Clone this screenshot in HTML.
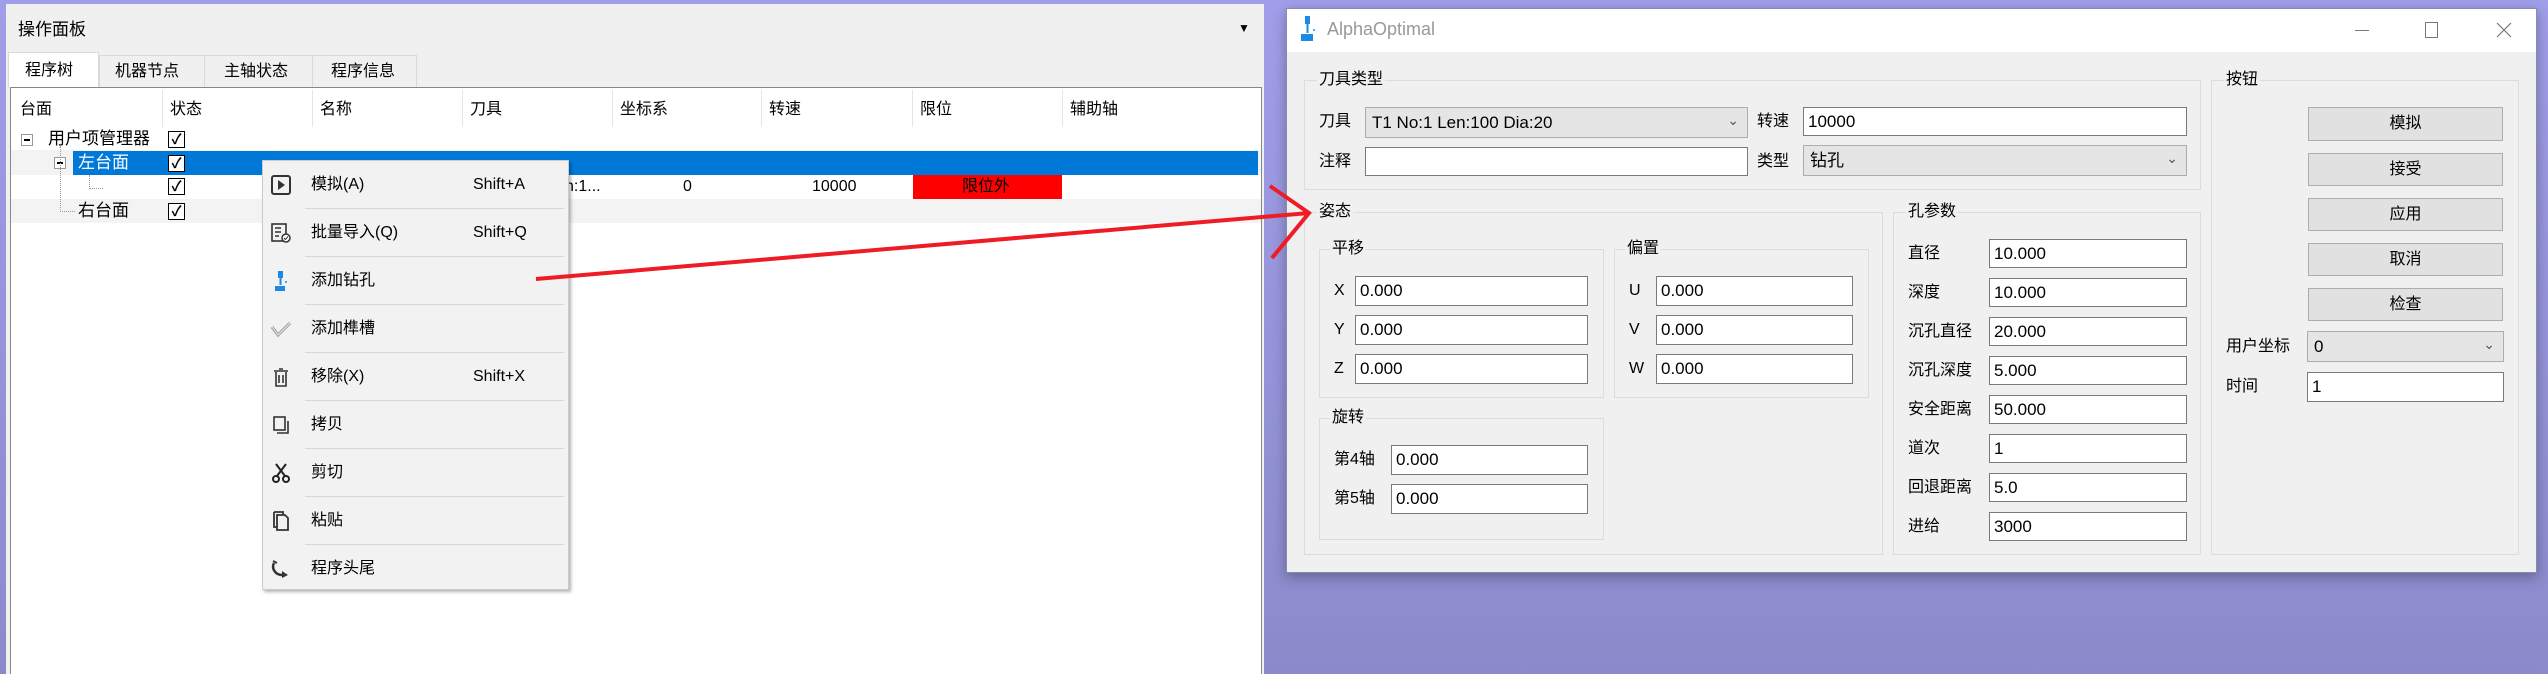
<!DOCTYPE html>
<html><head><meta charset="utf-8"><style>
*{box-sizing:border-box;margin:0;padding:0}
body{width:2548px;height:674px;overflow:hidden;position:relative;background:linear-gradient(#a09ee8,#8a8acb);font-family:"Liberation Sans","Noto Sans CJK SC",sans-serif;font-size:16px;color:#000}
.a{position:absolute}
.t{position:absolute;white-space:nowrap;line-height:20px}
.inp{position:absolute;background:#fff;border:1px solid #7a7a7a;padding-left:4px;line-height:27px;font-size:17px}
.cmb{position:absolute;background:#e5e5e5;border:1px solid #adadad;padding-left:6px;font-size:17px}
.cmb:after{content:"⌄";position:absolute;right:8px;top:-2px;font-size:14px;color:#555}
.grp{position:absolute;border:1px solid #dcdcdc}
.gl{position:absolute;background:#f0f0f0;padding:0 2px;line-height:20px;font-size:16px;top:-11px;left:12px}
.btn{position:absolute;background:#e1e1e1;border:1px solid #adadad;text-align:center;line-height:31px;font-size:16px}
.cb{position:absolute;width:17px;height:17px;border:1.5px solid #000;background:#fff;font-size:14px;line-height:14px;text-align:center;font-weight:bold}
.mi{position:absolute;left:0;width:307px;height:48px}
.mi .tx{position:absolute;left:48px;top:14px;line-height:20px}
.mi .sc{position:absolute;left:210px;top:14px;line-height:20px}
.mi .sep{position:absolute;left:42px;right:6px;bottom:0;height:1px;background:#d7d7d7}
.mi .ic{position:absolute;left:6px;top:12px;width:24px;height:24px}
</style></head><body>
<div class="a" style="left:6px;top:4px;width:1258px;height:670px;background:#f0f0f0"></div>
<div class="t" style="left:18px;top:20px;font-size:17px">操作面板</div>
<div class="t" style="left:1238px;top:18px;font-size:12px">▼</div>
<div class="a" style="left:8px;top:52px;width:91px;height:36px;background:#fff;border:1px solid #d9d9d9;border-bottom:none"></div>
<div class="a" style="left:99px;top:55px;width:318px;height:33px;background:#f0f0f0;border:1px solid #d9d9d9;border-bottom:none"></div>
<div class="a" style="left:204px;top:55px;width:1px;height:33px;background:#d9d9d9"></div>
<div class="a" style="left:312px;top:55px;width:1px;height:33px;background:#d9d9d9"></div>
<div class="t" style="left:25px;top:61px">程序树</div>
<div class="t" style="left:115px;top:62px">机器节点</div>
<div class="t" style="left:224px;top:62px">主轴状态</div>
<div class="t" style="left:331px;top:62px">程序信息</div>
<div class="a" style="left:10px;top:87px;width:1252px;height:587px;background:#fff;border:1px solid #828790;border-bottom:none"></div>
<div class="a" style="left:11px;top:88px;width:1250px;height:39px;background:#fff"></div>
<div class="t" style="left:20px;top:100px">台面</div>
<div class="a" style="left:162px;top:90px;width:1px;height:37px;background:#e5e5e5"></div><div class="t" style="left:170px;top:100px">状态</div>
<div class="a" style="left:312px;top:90px;width:1px;height:37px;background:#e5e5e5"></div><div class="t" style="left:320px;top:100px">名称</div>
<div class="a" style="left:462px;top:90px;width:1px;height:37px;background:#e5e5e5"></div><div class="t" style="left:470px;top:100px">刀具</div>
<div class="a" style="left:612px;top:90px;width:1px;height:37px;background:#e5e5e5"></div><div class="t" style="left:620px;top:100px">坐标系</div>
<div class="a" style="left:761px;top:90px;width:1px;height:37px;background:#e5e5e5"></div><div class="t" style="left:769px;top:100px">转速</div>
<div class="a" style="left:912px;top:90px;width:1px;height:37px;background:#e5e5e5"></div><div class="t" style="left:920px;top:100px">限位</div>
<div class="a" style="left:1062px;top:90px;width:1px;height:37px;background:#e5e5e5"></div><div class="t" style="left:1070px;top:100px">辅助轴</div>
<div class="a" style="left:11px;top:150px;width:1250px;height:25px;background:#f3f3f3"></div>
<div class="a" style="left:11px;top:199px;width:1250px;height:24px;background:#f3f3f3"></div>
<div class="a" style="left:73px;top:151px;width:1185px;height:24px;background:#0078d7"></div>
<div class="a" style="left:21px;top:134px;width:12px;height:12px;border:1px solid #999;background:#fff"></div><div class="a" style="left:24px;top:139px;width:6px;height:2px;background:#000"></div>
<div class="a" style="left:54px;top:157px;width:12px;height:12px;border:1px solid #999;background:#fff"></div><div class="a" style="left:57px;top:162px;width:6px;height:2px;background:#000"></div>
<div class="a" style="left:60px;top:146px;width:0;height:66px;border-left:1px dotted #999"></div>
<div class="a" style="left:60px;top:211px;width:15px;border-top:1px dotted #999"></div>
<div class="a" style="left:89px;top:175px;width:0;height:14px;border-left:1px dotted #999"></div>
<div class="a" style="left:89px;top:188px;width:14px;border-top:1px dotted #999"></div>
<div class="t" style="left:48px;top:129px;font-size:17px">用户项管理器</div>
<div class="t" style="left:78px;top:153px;font-size:17px;color:#fff">左台面</div>
<div class="t" style="left:78px;top:201px;font-size:17px">右台面</div>
<div class="cb" style="left:168px;top:131px">✓</div>
<div class="cb" style="left:168px;top:155px">✓</div>
<div class="cb" style="left:168px;top:178px">✓</div>
<div class="cb" style="left:168px;top:203px">✓</div>
<div class="t" style="left:565px;top:177px">n:1...</div>
<div class="t" style="left:683px;top:177px">0</div>
<div class="t" style="left:812px;top:177px">10000</div>
<div class="a" style="left:913px;top:175px;width:149px;height:24px;background:#ff0000"></div>
<div class="t" style="left:962px;top:177px">限位外</div>
<div class="a" style="left:262px;top:160px;width:307px;height:430px;background:#f2f2f2;border:1px solid #ccc;box-shadow:2px 2px 3px rgba(0,0,0,.3)">
 <div class="mi" style="top:0"><svg class="ic" viewBox="0 0 24 24"><rect x="3" y="3" width="18" height="18" rx="2" fill="none" stroke="#333" stroke-width="2"/><path d="M9 7l7 5-7 5z" fill="#333"/></svg><span class="tx">模拟(A)</span><span class="sc">Shift+A</span><div class="sep"></div></div>
 <div class="mi" style="top:48px"><svg class="ic" viewBox="0 0 24 24"><rect x="3" y="3" width="14" height="17" fill="none" stroke="#333" stroke-width="1.6"/><path d="M6 7h6M6 11h6M6 15h4" stroke="#333" stroke-width="1.6"/><circle cx="17" cy="17" r="4" fill="#fff" stroke="#333" stroke-width="1.5"/><path d="M15 17l1.5 1.5 2.5-3" stroke="#333" fill="none"/></svg><span class="tx">批量导入(Q)</span><span class="sc">Shift+Q</span><div class="sep"></div></div>
 <div class="mi" style="top:96px"><svg class="ic" viewBox="0 0 24 24"><rect x="9" y="2" width="5" height="7" fill="#1e88e5"/><path d="M11.5 9v7" stroke="#1e88e5" stroke-width="2"/><rect x="6" y="17" width="10" height="5" fill="#1e88e5"/><circle cx="17" cy="13" r="1" fill="#1e88e5"/></svg><span class="tx">添加钻孔</span><div class="sep"></div></div>
 <div class="mi" style="top:144px"><svg class="ic" viewBox="0 0 24 24"><path d="M3 10l6 8 12-12" stroke="#999" stroke-width="3" fill="none"/><path d="M3 10l6 8 12-12" stroke="#eee" stroke-width="1" fill="none"/></svg><span class="tx">添加榫槽</span><div class="sep"></div></div>
 <div class="mi" style="top:192px"><svg class="ic" viewBox="0 0 24 24"><path d="M5 6h14M10 4h4M7 7v14h10V7M10 10v8M14 10v8" stroke="#333" stroke-width="1.6" fill="none"/></svg><span class="tx">移除(X)</span><span class="sc">Shift+X</span><div class="sep"></div></div>
 <div class="mi" style="top:240px"><svg class="ic" viewBox="0 0 24 24"><rect x="5" y="4" width="11" height="13" fill="none" stroke="#333" stroke-width="1.6"/><path d="M8 20h11V8" stroke="#333" stroke-width="1.6" fill="none"/></svg><span class="tx">拷贝</span><div class="sep"></div></div>
 <div class="mi" style="top:288px"><svg class="ic" viewBox="0 0 24 24"><path d="M7 3l9 12M17 3l-9 12" stroke="#222" stroke-width="2"/><circle cx="7" cy="18" r="3" fill="none" stroke="#222" stroke-width="2"/><circle cx="17" cy="18" r="3" fill="none" stroke="#222" stroke-width="2"/></svg><span class="tx">剪切</span><div class="sep"></div></div>
 <div class="mi" style="top:336px"><svg class="ic" viewBox="0 0 24 24"><path d="M5 3h9v3M8 6h8l3 3v12H8z" stroke="#333" stroke-width="1.8" fill="none"/><path d="M5 3v15h3" stroke="#333" stroke-width="1.8" fill="none"/></svg><span class="tx">粘贴</span><div class="sep"></div></div>
 <div class="mi" style="top:384px"><svg class="ic" viewBox="0 0 24 24"><path d="M5 6c-3 6 2 12 8 12" stroke="#333" stroke-width="2.5" fill="none"/><path d="M13 14l6 4-6 3z" fill="#333"/><path d="M4 4l4 2" stroke="#333" stroke-width="2"/></svg><span class="tx">程序头尾</span></div>
</div>
<div class="a" style="left:1286px;top:8px;width:1251px;height:565px;background:#f0f0f0;border:1px solid #8a8ab0;box-shadow:0 4px 12px rgba(0,0,0,.3)"></div>
<div class="a" style="left:1287px;top:9px;width:1249px;height:43px;background:#fff"></div>
<svg class="a" style="left:1300px;top:16px" width="18" height="26" viewBox="0 0 18 26"><rect x="5" y="0" width="5" height="8" fill="#1e88e5"/><path d="M7.5 8v9" stroke="#1e88e5" stroke-width="2"/><rect x="1" y="18" width="12" height="7" fill="#1e88e5"/><circle cx="14" cy="14" r="1" fill="#1e88e5"/></svg>
<div class="t" style="left:1327px;top:19px;font-size:18px;color:#999">AlphaOptimal</div>
<div class="a" style="left:2355px;top:30px;width:14px;height:1px;background:#777"></div>
<div class="a" style="left:2425px;top:22px;width:13px;height:16px;border:1px solid #777"></div>
<svg class="a" style="left:2496px;top:22px" width="16" height="16"><path d="M1 1L15 15M15 1L1 15" stroke="#777" stroke-width="1.2"/></svg>
<div class="grp" style="left:1304px;top:80px;width:897px;height:110px"><span class="gl">刀具类型</span></div>
<div class="t" style="left:1319px;top:112px">刀具</div>
<div class="cmb" style="left:1365px;top:107px;width:383px;height:31px;line-height:29px">T1 No:1 Len:100 Dia:20</div>
<div class="t" style="left:1757px;top:112px">转速</div>
<div class="inp" style="left:1803px;top:107px;width:384px;height:29px">10000</div>
<div class="t" style="left:1319px;top:152px">注释</div>
<div class="inp" style="left:1365px;top:147px;width:383px;height:29px"></div>
<div class="t" style="left:1757px;top:152px">类型</div>
<div class="cmb" style="left:1803px;top:145px;width:384px;height:31px;line-height:29px">钻孔</div>
<div class="grp" style="left:1304px;top:212px;width:579px;height:343px"><span class="gl">姿态</span></div>
<div class="grp" style="left:1319px;top:249px;width:285px;height:149px"><span class="gl" style="left:10px">平移</span></div>
<div class="t" style="left:1334px;top:281px">X</div><div class="inp" style="left:1355px;top:276px;width:233px;height:30px">0.000</div>
<div class="t" style="left:1334px;top:320px">Y</div><div class="inp" style="left:1355px;top:315px;width:233px;height:30px">0.000</div>
<div class="t" style="left:1334px;top:359px">Z</div><div class="inp" style="left:1355px;top:354px;width:233px;height:30px">0.000</div>
<div class="grp" style="left:1614px;top:249px;width:255px;height:149px"><span class="gl" style="left:10px">偏置</span></div>
<div class="t" style="left:1629px;top:281px">U</div><div class="inp" style="left:1656px;top:276px;width:197px;height:30px">0.000</div>
<div class="t" style="left:1629px;top:320px">V</div><div class="inp" style="left:1656px;top:315px;width:197px;height:30px">0.000</div>
<div class="t" style="left:1629px;top:359px">W</div><div class="inp" style="left:1656px;top:354px;width:197px;height:30px">0.000</div>
<div class="grp" style="left:1319px;top:418px;width:285px;height:122px"><span class="gl" style="left:10px">旋转</span></div>
<div class="t" style="left:1334px;top:450px">第4轴</div><div class="inp" style="left:1391px;top:445px;width:197px;height:30px">0.000</div>
<div class="t" style="left:1334px;top:489px">第5轴</div><div class="inp" style="left:1391px;top:484px;width:197px;height:30px">0.000</div>
<div class="grp" style="left:1893px;top:212px;width:308px;height:343px"><span class="gl">孔参数</span></div>
<div class="t" style="left:1908px;top:244px">直径</div><div class="inp" style="left:1989px;top:239px;width:198px;height:29px">10.000</div>
<div class="t" style="left:1908px;top:283px">深度</div><div class="inp" style="left:1989px;top:278px;width:198px;height:29px">10.000</div>
<div class="t" style="left:1908px;top:322px">沉孔直径</div><div class="inp" style="left:1989px;top:317px;width:198px;height:29px">20.000</div>
<div class="t" style="left:1908px;top:361px">沉孔深度</div><div class="inp" style="left:1989px;top:356px;width:198px;height:29px">5.000</div>
<div class="t" style="left:1908px;top:400px">安全距离</div><div class="inp" style="left:1989px;top:395px;width:198px;height:29px">50.000</div>
<div class="t" style="left:1908px;top:439px">道次</div><div class="inp" style="left:1989px;top:434px;width:198px;height:29px">1</div>
<div class="t" style="left:1908px;top:478px">回退距离</div><div class="inp" style="left:1989px;top:473px;width:198px;height:29px">5.0</div>
<div class="t" style="left:1908px;top:517px">进给</div><div class="inp" style="left:1989px;top:512px;width:198px;height:29px">3000</div>
<div class="grp" style="left:2211px;top:80px;width:308px;height:475px"><span class="gl">按钮</span></div>
<div class="btn" style="left:2308px;top:107px;width:195px;height:34px">模拟</div>
<div class="btn" style="left:2308px;top:153px;width:195px;height:33px">接受</div>
<div class="btn" style="left:2308px;top:198px;width:195px;height:33px">应用</div>
<div class="btn" style="left:2308px;top:243px;width:195px;height:33px">取消</div>
<div class="btn" style="left:2308px;top:288px;width:195px;height:33px">检查</div>
<div class="t" style="left:2226px;top:337px">用户坐标</div>
<div class="cmb" style="left:2307px;top:331px;width:197px;height:31px;line-height:29px">0</div>
<div class="t" style="left:2226px;top:377px">时间</div>
<div class="inp" style="left:2307px;top:372px;width:197px;height:30px">1</div>
<svg class="a" style="left:0;top:0" width="2548" height="674"><path d="M536 279L1309 213M1270 186L1309 213L1272 258" stroke="#ee1c24" stroke-width="4" fill="none"/></svg>
</body></html>
